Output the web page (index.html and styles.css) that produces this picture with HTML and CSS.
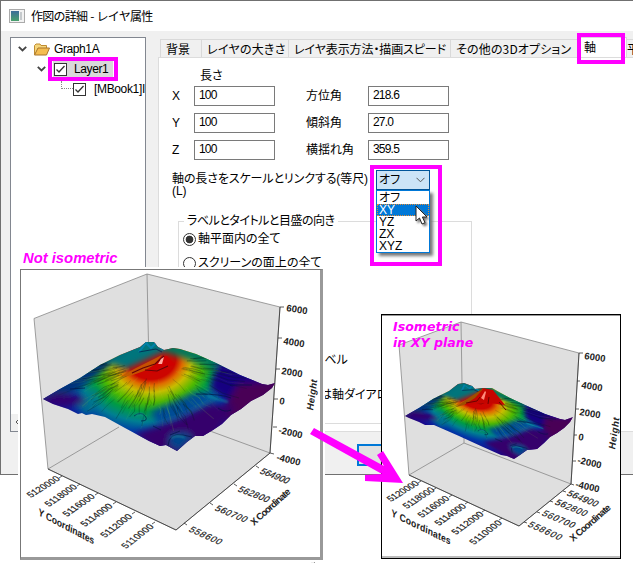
FILE: index.html
```html
<!DOCTYPE html>
<html lang="ja">
<head>
<meta charset="utf-8">
<title>作図の詳細 - レイヤ属性</title>
<link rel="stylesheet" href="styles.css">
</head>
<body>
<div class="dialog">
  <header class="titlebar">
    <svg class="app-icon" width="16" height="14" viewBox="0 0 16 14"><defs><linearGradient id="ic" x2="0" y2="1"><stop stop-color="#3d6c9a"/><stop offset="1" stop-color="#49a06c"/></linearGradient></defs><rect x=".5" y=".5" width="15" height="13" fill="#f2f2f2" stroke="#aaa"/><rect x="2" y="2" width="8" height="10" fill="url(#ic)"/><path d="M12 3v8" stroke="#c5c9cc" stroke-width="2"/></svg>
    <span class="title">作図の詳細 - レイヤ属性</span>
  </header>
  <div class="content">
    <div class="tree">
      <div class="node root"><svg class="chev" width="9" height="6"><path d="M.8.8 4.5 4.5 8.2.8"/></svg><svg class="folder" width="16" height="13" viewBox="0 0 16 13"><path d="M.5 11.5V2.5L2 1h4l1 1.5h5.5V5" fill="#f5d67c" stroke="#bf8c32"/><path d="M.5 12 4 5h11.5l-3 7z" fill="#f4bd51" stroke="#a8752a"/></svg><span>Graph1A</span></div>
      <div class="node layer"><svg class="chev" width="9" height="6"><path d="M.8.8 4.5 4.5 8.2.8"/></svg><span class="picked"><svg class="check" width="13" height="13"><rect x=".5" y=".5" width="12" height="12"/><path d="M2.5 6.5 5 9l5.500-6"/></svg><span>Layer1</span></span></div>
      <div class="node leaf"><i class="branch"></i><svg class="check" width="13" height="13"><rect x=".5" y=".5" width="12" height="12"/><path d="M2.500 6.500 5 9l5.500-6"/></svg><span>[MBook1]I</span></div>
      <div class="hscroll"><svg width="5" height="8"><path d="M4 1 1 4l3 3" fill="none" stroke="#555"/></svg></div>
    </div>
    <div class="tabs">
      <nav class="tabbar">
        <span class="tab t1">背景</span><span class="tab t2">レイヤの大きさ</span><span class="tab t3">レイヤ表示方法・描画スピード</span><span class="tab t4">その他の3Dオプション</span><span class="tab active">軸</span><span class="tab t6">平</span>
      </nav>
      <section class="panel">
        <div class="fields">
          <span></span><span class="head">長さ</span><span></span><span></span>
          <label>X</label><div class="input">100</div><label>方位角</label><div class="input">218.6</div>
          <label>Y</label><div class="input">100</div><label>傾斜角</label><div class="input">27.0</div>
          <label>Z</label><div class="input">100</div><label>横揺れ角</label><div class="input">359.5</div>
        </div>
        <div class="link-row">
          <div class="link-label"><span>軸の長さをスケールとリンクする(等尺)</span><br>(L)</div>
          <div class="select">オフ<svg width="9" height="6"><path d="M.5.8 4.500 4.800 8.500.8" fill="none" stroke="#555"/></svg>
            <div class="menu"><div>オフ</div><div class="hot">XY</div><div>YZ</div><div>ZX</div><div>XYZ</div></div>
          </div>
        </div>
        <div class="group">
          <span class="legend">ラベルとタイトルと目盛の向き</span>
          <div class="radio"><i class="on"></i><span>軸平面内の全て</span></div>
          <div class="radio second"><i></i><span>スクリーンの面上の全て</span></div>
          <div class="rest rest1">ラベル</div>
          <div class="rest rest2">は軸ダイアロ</div>
        </div>
      </section>
    </div>
  </div>
  <footer class="footer"><div class="button"></div></footer>
</div>
<div class="sliver"></div>

<div class="mark mark-layer"></div>
<div class="mark mark-tab"></div>
<div class="mark mark-menu"></div>
<svg class="cursor" width="14" height="21" viewBox="0 0 14 21"><path d="M1 1v15l3.500-3 2.500 6 3-1.300-2.600-5.700H12z" fill="#fff" stroke="#222"/></svg>
<div class="note note-a">Not isometric</div>
<div class="frame frame-a"></div>
<div class="frame frame-b"></div>

<svg class="plots" width="633" height="563" viewBox="0 0 633 563">
  <defs>
    <radialGradient id="heat" gradientUnits="userSpaceOnUse" cx="0" cy="0" r="1" gradientTransform="translate(152 360) rotate(-7) scale(124 101)">
      <stop offset=".19" stop-color="#cc0500"/><stop offset=".25" stop-color="#df6c00"/><stop offset=".32" stop-color="#c7bd00"/><stop offset=".42" stop-color="#4fb900"/><stop offset=".51" stop-color="#009b43"/><stop offset=".61" stop-color="#007f91"/><stop offset=".72" stop-color="#0038a6"/><stop offset=".86" stop-color="#18098f"/><stop offset="1" stop-color="#37005f"/>
    </radialGradient>
    <filter id="soft" x="-50%" y="-50%" width="200%" height="200%"><feGaussianBlur stdDeviation="3"/></filter>
    <filter id="fine" x="-50%" y="-50%" width="200%" height="200%"><feGaussianBlur stdDeviation="1"/></filter>
    <clipPath id="clipA"><path d="M43 399l17-10 20-11 20-13 20-10 20-8 6-5 8 0 4 5 6 3 9-2 7 1 16 5 20 9 24 12 22 9 6 1 7-2-3 5-9 7-12 6-10 8-10 6-9 9-9 6-10 6-8 0-8 6-10 9-11-6-6 1-11-5-24-13-20-11-13-3-6 1-4-2-4 1-10-5-15-5z"/></clipPath>
    <clipPath id="clipB"><path d="M405 416l14-8 14-9 16-8 9-7 6-1 8 3 3 3 8-1h9l7 4 11 6 15 7 20 9 15 5 5 1 8-3-3 5-6 6-7 5-7 4-6 6-7 6-10 1-7 5-6 4-7-3-6-1-18-8-24-11-25-11-9 0-6-3-10-4z"/></clipPath>
    <g id="terrain">
      <rect x="0" y="310" width="320" height="170" fill="url(#heat)"/>
      <g filter="url(#soft)">
        <path d="M38 394 154 328 157 345 112 364 80 388 45 404z" fill="#063079"/>
        <path d="M74 402l24-14 0 16-12 12z" fill="#00768c" opacity=".8"/>
        <path d="M106 362l39-28 30 3 20 14-14 0-18 1-15 7-22 10z" fill="#00747c"/>
        <path d="M165 338l55 20 18 16-30-6-24-10-20-6z" fill="#00765b"/>
        <path d="M218 358l62 27-40 24-30-20z" fill="#190281"/>
        <path d="M238 384l45-3-42 38-25 2z" fill="#490056"/>
        <path d="M134 434l42-14 34-16 26 2-25 34-45 18z" fill="#34006c"/>
        <path d="M150 412l46-20 22 3-34 20-26 8z" fill="#0030a8" opacity=".75"/>
        <path d="M168 444l2-10 16-2 7 6-14 13z" fill="#00458d"/>
        <path d="M38 400l18-7 25 3 5 7-21 4z" fill="#30006f"/>
      </g>
      <g id="ridges"></g>
      <path d="M141 370q6-5 14-6l8-8 4 0 8 9q-13 2-20 8z" fill="#d00000"/>
      <path d="M121 376l15-8 14-7 12-6-8 10-10 6-14 5z" fill="#c75d00" opacity=".85"/>
      <path d="M132 373l11-5 12-4 9-8M145 370l12 1 11-5" fill="none" stroke="#620606" stroke-width="1.200"/>
      <path d="M158 364l3-5 3-2-2 7z" fill="#ffaaa0"/>
      <path d="M139 352l7-9 5 5 5-5 7 7" fill="none" stroke="#0080a8" stroke-width="2"/>
      <g fill="none" stroke="#001445" stroke-width=".9" opacity=".75">
        <path d="M134 416q7-5 11 0t-4 5M168 446q1-14 15-11l9 2M196 394q14 0 22 1t13 3M218 408q7 5 13 2M230 385l22 0M180 431l-10 4M139 352l17-3 6 3M85 388l-15 1M161 430l-8-4"/>
      </g>
      <path d="M136 416q4-4 8 0M171 438q7-4 14 0M207 396l21 6" stroke="#1392a1" stroke-width="2" fill="none" opacity=".65" filter="url(#fine)"/>
    </g>
  </defs>

  <g class="box">
    <path class="wall" d="M34 318.500 147 274l133 33-10 146-94 77-128-61z"/>
    <path d="M147 274l1.500 70M48 469l71-42M210 431l60 22"/>
    <path class="axis" d="M280 307 270 453 176 530 48 469M280 307h4M278 338h4M276 369h4M274 399h4M273 427h4M270 453l4 1M256 466l3 2M234 484l3 2M210 503l3 2M184 523l3 2M62 476l-3 2M80 484l-3 2M98 493l-3 2M116 502l-3 2M135 512l-3 2M155 522l-3 2"/>
  </g>
  <g clip-path="url(#clipA)"><use href="#terrain"/></g>
  <g class="ticks">
    <text transform="translate(286 311) rotate(9)">6000</text><text transform="translate(283 344) rotate(9)">4000</text><text transform="translate(281 374) rotate(9)">2000</text><text transform="translate(279 404) rotate(8)">0</text><text transform="translate(278 433) rotate(13)">-2000</text><text transform="translate(276 460) rotate(14)">-4000</text>
    <g class="slant"><text transform="translate(259 473) rotate(21) skewX(-20)" textLength="30">564900</text><text transform="translate(237 491) rotate(21) skewX(-20)" textLength="32">562800</text><text transform="translate(214 510) rotate(22) skewX(-20)" textLength="33">560700</text><text transform="translate(188 531) rotate(24) skewX(-20)" textLength="34">558600</text>
    <text transform="translate(31 498) rotate(-32) skewX(20)" textLength="35">5120000</text><text transform="translate(49 507) rotate(-34) skewX(20)" textLength="35">5118000</text><text transform="translate(67 517) rotate(-35) skewX(20)" textLength="35">5116000</text><text transform="translate(85 527) rotate(-36) skewX(20)" textLength="35">5114000</text><text transform="translate(105 538) rotate(-37) skewX(20)" textLength="35">5112000</text><text transform="translate(126 549) rotate(-38) skewX(20)" textLength="36">5110000</text></g>
    <text class="name" transform="translate(313 411) rotate(-82) skewX(-10)" textLength="31">Height</text><text class="name" transform="translate(38 515) rotate(28) skewX(20)" textLength="63">Y Coordinates</text><text class="name" transform="translate(254 526) rotate(-42)" textLength="50">X Coordinate</text>
  </g>

  <g class="box">
    <path class="wall" d="M399 345l62-23 118 31-8 131-52 42-110-51z"/>
    <path d="M461 322l1 62M409 475l55-32v-8M464 443l107 41"/>
    <path class="axis" d="M579 353 571 484 519 526 409 475M579 353h4M577 381h3M576 409h3M574 435h3M573 461h3M571 484l3 1M563 491l3 1M550 501l3 1M537 512l3 1M524 522l3 1M421 481l-3 2M436 488l-3 2M452 495l-3 2M468 502l-3 2M485 510l-3 2M502 518l-3 2"/>
  </g>
  <g clip-path="url(#clipB)"><use href="#terrain" transform="matrix(.7426 .0687 .306 .6389 251 156)"/><path d="M464 405l14-13 5-4 10 2 12 15-16-2z" fill="#c50500"/><path d="M456 407l14-10 14-9-9 10-11 7z" fill="#9e4e00"/><path d="M481 398l4-7 1 1-2 8z" fill="#ff8b7b"/><path d="M466 403l11-2 3-4M489 397l-1 7M499 402l7 8" stroke="#690400" fill="none"/></g>
  <g class="ticks">
    <text transform="translate(584 359) rotate(8)">6000</text><text transform="translate(581 388) rotate(9)">4000</text><text transform="translate(579 415) rotate(9)">2000</text><text transform="translate(578 440) rotate(8)">0</text><text transform="translate(577 463) rotate(13)">-2000</text><text transform="translate(575 487) rotate(13)">-4000</text>
    <g class="slant"><text transform="translate(566 495) rotate(22) skewX(-20)" textLength="32">564900</text><text transform="translate(554 504) rotate(22) skewX(-20)" textLength="33">562800</text><text transform="translate(541 515) rotate(23) skewX(-20)" textLength="34">560700</text><text transform="translate(527 526) rotate(24) skewX(-20)" textLength="35">558600</text>
    <text transform="translate(391 502) rotate(-32) skewX(20)" textLength="34">5120000</text><text transform="translate(407 509) rotate(-33) skewX(20)" textLength="34">5118000</text><text transform="translate(422 518) rotate(-34) skewX(20)" textLength="34">5116000</text><text transform="translate(439 526) rotate(-35) skewX(20)" textLength="34">5114000</text><text transform="translate(456 535) rotate(-36) skewX(20)" textLength="35">5112000</text><text transform="translate(474 545) rotate(-37) skewX(20)" textLength="36">5110000</text></g>
    <text class="name" transform="translate(615 450) rotate(-82) skewX(-10)" textLength="32">Height</text><text class="name" transform="translate(391 516) rotate(26) skewX(20)" textLength="66">Y Coordinates</text><text class="name" transform="translate(573 542) rotate(-41)" textLength="51">X Coordinate</text>
  </g>
  <path class="arrow" d="M314 428l70 38-7-11 6-4 20 32-38-2v-6l17-1-72-40z"/>
</svg>
<div class="note note-b">Isometric<br>in XY plane</div>
<script src="ridges.js"></script>
</body>
</html>
```
FILE: styles.css
```css
* { box-sizing: border-box; }
body { margin: 0; width: 633px; height: 563px; overflow: hidden; position: relative; background: #fff; color: #000; font: 12px/14px "Liberation Sans", "Noto Sans CJK JP", sans-serif; font-feature-settings: "palt"; }
svg { display: block; flex: none; }
.dialog { width: 633px; height: 475px; border: 1px solid #707070; border-right: 0; background: #f0f0f0; display: flex; flex-direction: column; white-space: nowrap; overflow: hidden; }
.titlebar { height: 30px; background: #fff; display: flex; align-items: center; padding-left: 8px; gap: 6px; }
.title { font: 12px/16px "Noto Sans CJK JP", sans-serif; letter-spacing: -.75px; word-spacing: 1px; }
.content { height: 401px; padding: 6px 0 0 9px; display: flex; gap: 12px; }
.tree { flex: none; width: 136px; height: 395px; background: #fff; border: 1px solid #828790; padding-top: 1px; overflow: hidden; display: flex; flex-direction: column; }
.node { height: 20px; display: flex; align-items: center; }
.node > span { margin-left: 4px; }
.root { padding-left: 7px; }
.root span { letter-spacing: -.4px; }
.folder { margin-left: 7px; }
.layer { padding-left: 26px; }
.chev path { fill: none; stroke: #444; stroke-width: 1.800; }
.check rect { fill: #fff; stroke: #333; }
.check path { fill: none; stroke: #333; stroke-width: 1.300; }
.node .picked { margin-left: 7px; padding: 0 4px 0 1px; height: 17px; width: 60px; display: flex; align-items: center; gap: 7px; background: #d9d9d9; }
.picked span { letter-spacing: -.4px; }
.leaf { padding-left: 50px; }
.branch { flex: none; width: 12px; height: 8px; margin: -8px 0 0; border: 1px dotted #888; border-width: 0 0 1px 1px; }
.leaf > span { margin-left: 8px; letter-spacing: -.35px; }
.hscroll { margin-top: auto; height: 17px; background: #f0f0f0; padding: 4px 0 0 4px; }
.tabs { flex: 1; min-width: 0; display: flex; flex-direction: column; }
.tabbar { height: 20px; padding: 2px 0 0 2px; display: flex; }
.tab { flex: none; height: 18px; border: 1px solid #d9d9d9; border-width: 1px 1px 0 0; padding-left: 5px; line-height: 17px; font-family: "Noto Sans CJK JP", sans-serif; }
.t1 { width: 42px; border-left-width: 1px; }
.t2 { width: 87px; letter-spacing: .25px; }
.t3 { width: 162px; letter-spacing: -.1px; }
.t4 { width: 127px; letter-spacing: .15px; }
.tab.active { width: 49px; height: 21px; margin-top: -2px; background: #fff; line-height: 18px; padding-left: 6px; }
.t6 { width: 14px; padding-left: 0; overflow: hidden; }
.panel { flex: 1; border: 1px solid #dcdcdc; border-right: 0; background: #fff; padding: 6px 0 0 13px; }
.fields { display: grid; grid-template-columns: 22px 112px 62px 81px; grid-template-rows: 15px 20px 20px 20px; row-gap: 7px; margin-bottom: 10px; align-items: center; }
.fields > :nth-child(-n+4) { margin-bottom: -9px; }
.head { padding-left: 6px; }
.input { width: 81px; height: 20px; border: 1px solid #7a7a7a; padding-left: 4px; line-height: 17px; letter-spacing: -.8px; }
.link-row { display: flex; height: 20px; }
.link-label { width: 204px; line-height: 12px; padding-top: 3px; letter-spacing: -.1px; }
.select { width: 54px; height: 20px; border: 1px solid #005499; background: #cce4f7; position: relative; z-index: 1; display: flex; align-items: center; justify-content: space-between; padding: 0 4px 0 2px; }
.menu { position: absolute; left: -1px; top: 19px; width: 54px; height: 63px; border: 1px solid #0078d7; background: #fff; line-height: 12px; box-shadow: 3px 3px 3px #777; padding-top: 1px; }
.menu div { height: 12px; padding-left: 2px; }
.menu .hot { background: #0078d7; color: #fff; outline: 1px dotted #e08b38; outline-offset: -1px; }
.group { width: 294px; height: 203px; margin: 31px 0 0 6px; border: 1px solid #dcdcdc; padding-left: 4px; position: relative; }
.legend { display: block; width: max-content; margin: -9px 0 0 1px; padding: 0 3px; background: #fff; line-height: 17px; letter-spacing: -.5px; }
.radio { display: flex; align-items: center; height: 18px; gap: 2px; }
.second { margin-top: 6px; }
.radio i { width: 13px; height: 13px; border: 1px solid #333; border-radius: 50%; }
.radio .on { background: radial-gradient(#333 0 3.500px, #fff 4.200px); }
.rest { padding-left: 131px; height: 35px; }
.rest1 { margin-top: 81px; }
.rest2 { padding-left: 137px; }
.footer { flex: 1; padding: 12px 0 0 356px; }
.button { width: 75px; height: 22px; border: 2px solid #0078d7; background: #e1e1e1; }
.sliver { width: 4px; height: 5px; margin: 83px 0 0 311px; border-right: 1px solid #999; background: #eee; }
.mark { position: absolute; border: 4px solid #f0f; }
.mark-layer { left: 48px; top: 57px; width: 70px; height: 24px; }
.mark-tab { left: 577px; top: 33px; width: 48px; height: 31px; }
.mark-menu { left: 370px; top: 165px; width: 72px; height: 101px; }
.cursor { position: absolute; z-index: 2; left: 415px; top: 205px; filter: drop-shadow(2px 2px 1px #777); }
.note { position: absolute; color: #f0f; font-weight: bold; font-style: italic; white-space: nowrap; }
.note-a { left: 23px; top: 250px; font-size: 14.800px; line-height: 17px; }
.note-b { left: 393px; top: 319px; font: italic bold 12.600px/16px "DejaVu Sans", sans-serif; }
.frame { position: absolute; background: #fff; }
.frame-a { left: 20px; top: 269px; width: 303px; height: 291px; border: 1px solid #777; border-right: 3px solid #999; border-bottom: 3px solid #999; box-shadow: 0 0 0 2px #fff; }
.frame-b { left: 381px; top: 314px; width: 240px; height: 245px; border: 1px solid #000; box-shadow: inset 0 2px 0 -1px #999, inset 0 -2px 0 #bbb; }
.plots { position: absolute; left: 0; top: 0; }
.box path { fill: none; stroke: #888; stroke-width: .8; }
.box .wall { fill: #dfdfdf; }
.box .axis { stroke: #333; }
.ticks { font: bold 9.500px "Liberation Sans", sans-serif; fill: #222; }
.slant { font-size: 9px; font-weight: normal; stroke: #222; stroke-width: .2; }
.name { font-size: 9.500px; }
.arrow { fill: #f0f; }
```
FILE: ridges.js
```js
// Erosion gullies: thin strokes running downhill from the summit.
const group = document.getElementById('ridges');
let seed = 17;
const rnd = () => (seed = (seed * 16807) % 2147483647) / 2147483647;
for (let i = 0; i < 190; i++) {
  const a = -0.1 + rnd() * 3.2;
  const start = 20 + rnd() * 34, len = 8 + rnd() * 22;
  const at = (r, da) => {
    const t = a + da;
    return `${(154 + Math.cos(t) * r * 1.3).toFixed(1)} ${(361 + Math.sin(t) * r * 0.9).toFixed(1)}`;
  };
  const p = document.createElementNS('http://www.w3.org/2000/svg', 'path');
  p.setAttribute('d', `M${at(start, 0)}L${at(start + len / 2, (rnd() - 0.5) * 0.09)} ${at(start + len, 0)}`);
  p.setAttribute('fill', 'none');
  const dark = rnd() < 0.6;
  p.setAttribute('stroke', dark ? '#001c18' : '#a0f040');
  p.setAttribute('stroke-opacity', dark ? 0.3 : 0.13);
  p.setAttribute('stroke-width', (0.4 + rnd() * 0.7).toFixed(2));
  group.appendChild(p);
}
```
